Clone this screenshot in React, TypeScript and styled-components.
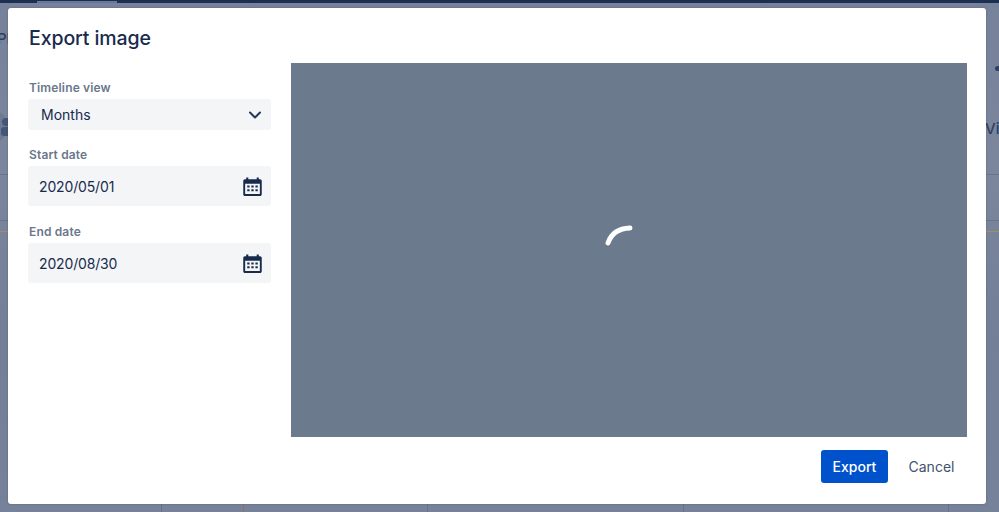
import styled, { createGlobalStyle } from 'styled-components';

const GlobalStyle = createGlobalStyle`
    html, body {
        margin: 0;
        padding: 0;
        width: 999px;
        height: 512px;
        overflow: hidden;
    }
    body {
        font-family: Inter, "Liberation Sans", sans-serif;
        color: #172b4d;
    }
`;

const Backdrop = styled.div`
    position: relative;
    box-sizing: border-box;
    width: 999px;
    height: 512px;
    padding: 8px 13px 8px 8px;
    background: linear-gradient(#76829a 0, #7b869c 170px, #727f96 340px, #76829a 512px);
    overflow: hidden;
`;

const TopBar = styled.div`
    position: absolute;
    left: 0;
    top: 0;
    width: 100%;
    height: 3px;
    background: #1d2f50;
`;

const TopTab = styled.div`
    position: absolute;
    left: 37px;
    top: 1px;
    width: 80px;
    height: 2px;
    background: #66789a;
`;

const RowLine = styled.div<{ $top: number; $gold?: boolean }>`
    position: absolute;
    left: 0;
    top: ${(p) => p.$top}px;
    width: 100%;
    height: 1px;
    background: ${(p) => (p.$gold ? '#a08f62' : '#68748c')};
`;

const ColumnLine = styled.div<{ $left: number; $orange?: boolean }>`
    position: absolute;
    left: ${(p) => p.$left}px;
    top: 175px;
    bottom: 0;
    width: 1px;
    background: ${(p) => (p.$orange ? '#96705f' : '#65718c')};
`;

const PageText = styled.span<{ $left: number; $top: number }>`
    position: absolute;
    left: ${(p) => p.$left}px;
    top: ${(p) => p.$top}px;
    font-size: 15px;
    font-weight: 500;
    line-height: 18px;
    color: #2f3f62;
`;

const AvatarCircle = styled.div`
    position: absolute;
    left: -25px;
    top: 110px;
    width: 33px;
    height: 33px;
    background: #6d7a92;
    border-radius: 50%;
`;

const AvatarHead = styled.div`
    position: absolute;
    left: 2px;
    top: 118px;
    width: 8px;
    height: 8px;
    background: #45557a;
    border-radius: 50%;
`;

const AvatarBody = styled.div`
    position: absolute;
    left: 1px;
    top: 127px;
    width: 10px;
    height: 9px;
    background: #45557a;
    border-radius: 3px;
`;

const PageDot = styled.div`
    position: absolute;
    left: 995px;
    top: 66px;
    width: 5px;
    height: 5px;
    background: #2f3f62;
    border-radius: 50%;
`;

const Modal = styled.div`
    position: relative;
    box-sizing: border-box;
    display: flex;
    flex-direction: column;
    height: 496px;
    padding: 18px 19px 21px 21px;
    background: #fff;
    border-radius: 3px;
    box-shadow: 0 0 2px rgba(9, 30, 66, 0.3);
`;

const Title = styled.h1`
    margin: 0 0 12px;
    font-size: 19.5px;
    font-weight: 500;
    line-height: 25px;
    letter-spacing: -0.1px;
    color: #172b4d;
`;

const Body = styled.div`
    display: flex;
    gap: 20px;
    height: 374px;
    margin-left: -1px;
`;

const Sidebar = styled.div`
    display: flex;
    flex-direction: column;
    width: 243px;
    padding-top: 17px;
`;

const Field = styled.div`
    display: flex;
    flex-direction: column;
    margin-bottom: 18px;

    &:first-child {
        margin-bottom: 17px;
    }
`;

const Label = styled.label`
    font-size: 12px;
    font-weight: 600;
    line-height: 15px;
    letter-spacing: 0.15px;
    margin-bottom: 4px;
    margin-left: 1px;
    color: #6b778c;
`;

const SelectBox = styled.div`
    display: flex;
    align-items: center;
    justify-content: space-between;
    height: 31px;
    padding: 0 9px 0 13px;
    font-size: 14px;
    background: #f4f5f7;
    border-radius: 3px;
`;

const DateBox = styled.div`
    display: flex;
    align-items: center;
    justify-content: space-between;
    height: 40px;
    padding: 0 8px 0 11px;
    font-size: 14px;
    letter-spacing: -0.15px;
    background: #f4f5f7;
    border-radius: 3px;
`;

const Preview = styled.div`
    display: flex;
    align-items: center;
    justify-content: center;
    width: 676px;
    background: #6c7a8e;
`;

const Footer = styled.div`
    display: flex;
    justify-content: flex-end;
    align-items: center;
    gap: 8px;
    margin-top: 13px;
`;

const Button = styled.button<{ $primary?: boolean }>`
    all: unset;
    box-sizing: border-box;
    display: flex;
    align-items: center;
    justify-content: center;
    height: 33px;
    width: ${(p) => (p.$primary ? 67 : 71)}px;
    font-size: 14px;
    font-weight: ${(p) => (p.$primary ? 500 : 400)};
    color: ${(p) => (p.$primary ? '#fff' : '#42526e')};
    background: ${(p) => (p.$primary ? '#0052cc' : 'transparent')};
    border-radius: 3px;
`;

const SpinnerSvg = styled.svg`
    margin: -31px 0 0 -19px;
`;

const Chevron = () => (
    <svg width="14" height="10" viewBox="0 0 14 10" fill="none">
        <path d="M2 2.5L7 7.5L12 2.5" stroke="#253858" strokeWidth="2" strokeLinecap="round" strokeLinejoin="round" />
    </svg>
);

const CalendarIcon = () => (
    <svg width="21" height="21" viewBox="0 0 20 20">
        <path
            fillRule="evenodd"
            fill="#172b4d"
            d="M4 1.500h2v1.600h8V1.500h2v1.600h1.200c.9 0 1.600.7 1.600 1.600v12.600c0 .9-.7 1.700-1.600 1.700H2.800c-.9 0-1.600-.8-1.600-1.700V4.700c0-.9.7-1.600 1.600-1.600H4zM3 7.400v9.400c0 .3.100.4.4.4h13.200c.3 0 .4-.1.4-.4V7.400z"
        />
        <path
            fill="#172b4d"
            d="M5 9h2.200v2H5zM8.900 9h2.200v2H8.900zM12.800 9H15v2h-2.200zM5 12.600h2.200v2H5zM8.900 12.600h2.200v2H8.900zM12.800 12.600H15v2h-2.200z"
        />
    </svg>
);

const Spinner = () => (
    <SpinnerSvg width="30" height="24" viewBox="0 0 30 24" fill="none">
        <path d="M3 20C6 11 12 5.500 25 5" stroke="#fff" strokeWidth="5" strokeLinecap="round" />
    </SpinnerSvg>
);

const App = () => {
    return (
        <>
            <GlobalStyle />
            <Backdrop>
                <TopBar />
                <TopTab />
                <RowLine $top={174} />
                <RowLine $top={220} />
                <RowLine $top={231} $gold />
                <ColumnLine $left={161} />
                <ColumnLine $left={243} $orange />
                <ColumnLine $left={427} />
                <ColumnLine $left={683} />
                <ColumnLine $left={948} />
                <PageText $left={-3} $top={30}>PN</PageText>
                <PageText $left={985} $top={120}>View</PageText>
                <AvatarCircle />
                <AvatarHead />
                <AvatarBody />
                <PageDot />
                <Modal>
                    <Title>Export image</Title>
                    <Body>
                        <Sidebar>
                            <Field>
                                <Label>Timeline view</Label>
                                <SelectBox>
                                    Months
                                    <Chevron />
                                </SelectBox>
                            </Field>
                            <Field>
                                <Label>Start date</Label>
                                <DateBox>
                                    2020/05/01
                                    <CalendarIcon />
                                </DateBox>
                            </Field>
                            <Field>
                                <Label>End date</Label>
                                <DateBox>
                                    2020/08/30
                                    <CalendarIcon />
                                </DateBox>
                            </Field>
                        </Sidebar>
                        <Preview>
                            <Spinner />
                        </Preview>
                    </Body>
                    <Footer>
                        <Button $primary>Export</Button>
                        <Button>Cancel</Button>
                    </Footer>
                </Modal>
            </Backdrop>
        </>
    );
};

export default App;
